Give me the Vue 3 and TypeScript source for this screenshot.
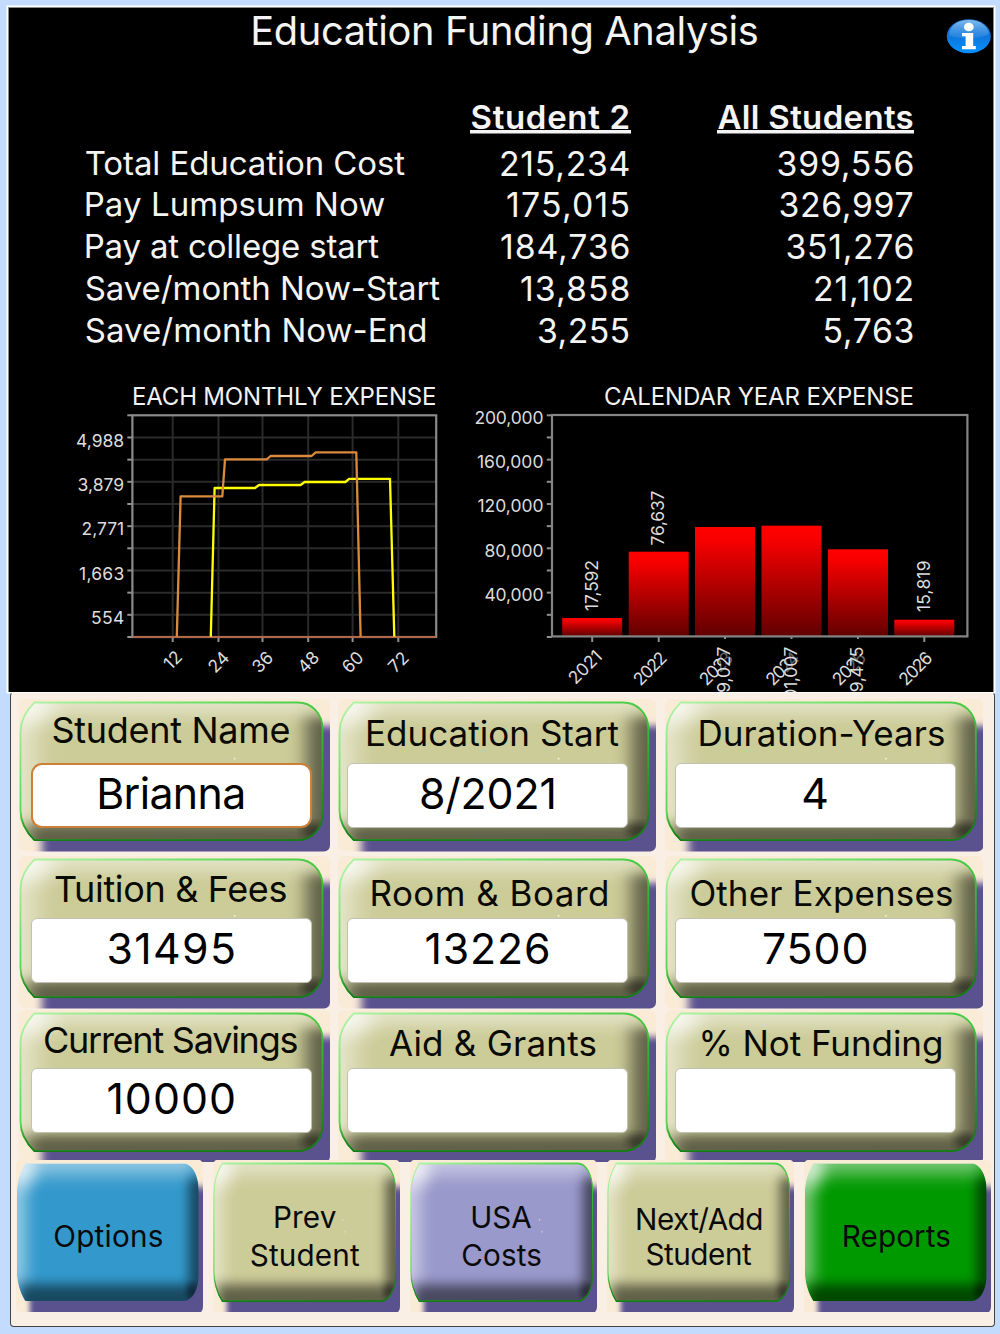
<script setup lang="ts">
interface Row { label: string; lw: number; a: string; aw: number; b: string; bw: number }
interface Card { label: string; x: number; w: number; base: number; value: string; vw: number; fx: number; fy: number; small: boolean; active?: boolean }
interface Line { text: string; w: number }
interface Button { lines: Line[]; color: string; edge: boolean; top: number; lh: number; shift: number }

/* Spreads the letters so that the inked width of the text equals the given number of pixels,
   and trims the side bearings so that the box is exactly the ink. */
const vFit = {
  mounted(el: HTMLElement, binding: { value: number }) {
    const cs = getComputedStyle(el)
    const ctx = document.createElement('canvas').getContext('2d')
    if (!ctx) return
    ctx.font = `${cs.fontWeight} ${cs.fontSize} Inter, sans-serif`
    const text = (el.textContent || '').trim()
    const m = ctx.measureText(text)
    const ink = m.actualBoundingBoxRight + m.actualBoundingBoxLeft
    const gap = text.length > 1 ? (binding.value - 1.4 - ink) / (text.length - 1) : 0
    el.style.letterSpacing = `${gap}px`
    el.style.marginLeft = `${m.actualBoundingBoxLeft + 0.7}px`
    el.style.marginRight = `${m.actualBoundingBoxRight - m.width - gap + 0.7}px`
  },
}

const rows: Row[] = [
  { label: 'Total Education Cost', lw: 321, a: '215,234', aw: 129, b: '399,556', bw: 135.5 },
  { label: 'Pay Lumpsum Now', lw: 300, a: '175,015', aw: 123, b: '326,997', bw: 133.5 },
  { label: 'Pay at college start', lw: 295, a: '184,736', aw: 129, b: '351,276', bw: 126.5 },
  { label: 'Save/month Now-Start', lw: 356, a: '13,858', aw: 109, b: '21,102', bw: 99 },
  { label: 'Save/month Now-End', lw: 341, a: '3,255', aw: 91, b: '5,763', bw: 89.5 },
]

const cards: Card[] = [
  { label: 'Student Name', x: 34, w: 237.5, base: 43.8, value: 'Brianna', vw: 145.5, fx: 12, fy: 63.5, small: false, active: true },
  { label: 'Education Start', x: 29, w: 252, base: 46.3, value: '8/2021', vw: 134, fx: 8.5, fy: 63.5, small: true },
  { label: 'Duration-Years', x: 35, w: 245, base: 46.3, value: '4', vw: 25, fx: 10, fy: 63.5, small: true },
  { label: 'Tuition & Fees', x: 35.5, w: 233, base: 46, value: '31495', vw: 127, fx: 12, fy: 61.5, small: false },
  { label: 'Room & Board', x: 33.5, w: 236, base: 49.5, value: '13226', vw: 123, fx: 8.5, fy: 61.5, small: true },
  { label: 'Other Expenses', x: 26, w: 262, base: 49.5, value: '7500', vw: 104, fx: 10, fy: 61.5, small: true },
  { label: 'Current Savings', x: 25.5, w: 254, base: 43.5, value: '10000', vw: 127, fx: 12, fy: 58.5, small: false },
  { label: 'Aid & Grants', x: 50, w: 208, base: 46.3, value: '', vw: 0, fx: 8.5, fy: 58.5, small: true },
  { label: '% Not Funding', x: 36, w: 241, base: 46.3, value: '', vw: 0, fx: 10, fy: 58.5, small: true },
]

const buttons: Button[] = [
  { lines: [{ text: 'Options', w: 110 }], color: '#3399cc', edge: false, top: 57, lh: 38, shift: -1 },
  { lines: [{ text: 'Prev', w: 62 }, { text: 'Student', w: 110.5 }], color: '#cccc99', edge: true, top: 38.5, lh: 38, shift: -1 },
  { lines: [{ text: 'USA', w: 60.5 }, { text: 'Costs', w: 80.5 }], color: '#9999cc', edge: true, top: 38.5, lh: 38, shift: -1.5 },
  { lines: [{ text: 'Next/Add', w: 125.5 }, { text: 'Student', w: 107 }], color: '#cccc99', edge: true, top: 42, lh: 35.3, shift: -1 },
  { lines: [{ text: 'Reports', w: 108 }], color: '#009900', edge: false, top: 57, lh: 38, shift: 0 },
]

const body = 'M15.5 3.5 H279 C292 3.5 303.5 14 303.5 30 V116 C303.5 131 292 141.5 279 141.5 H15.5 C9 135 1.5 125 1.5 112 V33 C1.5 20 9 10 15.5 3.5 Z'

const yTicks = Array.from({ length: 11 }, (_, i) => 415.3 + i * 22.17)
const monthY = [
  { t: '4,988', w: 46.5, y: 446.8 }, { t: '3,879', w: 45, y: 491 }, { t: '2,771', w: 41, y: 535.3 },
  { t: '1,663', w: 43.5, y: 579.5 }, { t: '554', w: 31.5, y: 624 },
]
const months = [
  { t: '12', x: 172.7, cy: 660 }, { t: '24', x: 218.5, cy: 662 }, { t: '36', x: 262.5, cy: 662 },
  { t: '48', x: 308.2, cy: 662 }, { t: '60', x: 352.6, cy: 662 }, { t: '72', x: 398.3, cy: 662 },
]
const yearY = [
  { t: '200,000', w: 67.5, y: 423.8 }, { t: '160,000', w: 65, y: 468 }, { t: '120,000', w: 64.5, y: 512.3 },
  { t: '80,000', w: 57.5, y: 556.5 }, { t: '40,000', w: 57.5, y: 600.8 },
]
const years = [
  { t: '2021', x: 592.2, top: 618, v: '17,592', vy: 611, vw: 51, low: false, cx: 585, cy: 667 },
  { t: '2022', x: 658.7, top: 551.7, v: '76,637', vy: 545.5, vw: 55, low: false, cx: 650, cy: 668.5 },
  { t: '2023', x: 725, top: 527, v: '99,027', vy: 703.5, vw: 57, low: true, cx: 716, cy: 668.5 },
  { t: '2024', x: 791.5, top: 525.7, v: '101,007', vy: 706.5, vw: 60, low: true, cx: 782.5, cy: 668.5 },
  { t: '2025', x: 858, top: 549.3, v: '79,475', vy: 701.5, vw: 55, low: true, cx: 849, cy: 668.5 },
  { t: '2026', x: 924.3, top: 619.7, v: '15,819', vy: 612, vw: 51.5, low: false, cx: 915.5, cy: 668.5 },
]
</script>

<template>
  <main class="app">
    <svg class="defs" width="0" height="0" aria-hidden="true">
      <defs>
        <clipPath id="tileClip"><rect width="311" height="153" rx="6" /></clipPath>
        <clipPath id="bodyClip"><path :d="body" /></clipPath>
        <filter id="soft4" x="-20%" y="-20%" width="140%" height="140%" color-interpolation-filters="sRGB"><feGaussianBlur stdDeviation="4" /></filter>
        <filter id="soft6" x="-60" y="-60" width="440" height="280" filterUnits="userSpaceOnUse" color-interpolation-filters="sRGB"><feGaussianBlur stdDeviation="9 6" /></filter>
        <filter id="soft9" x="-90" y="-90" width="500" height="340" filterUnits="userSpaceOnUse" color-interpolation-filters="sRGB"><feGaussianBlur stdDeviation="12 9" /></filter>
        <linearGradient id="edge" x1="0" y1="0" x2="1" y2="1">
          <stop offset="0" stop-color="#b5f3a9" />
          <stop offset=".3" stop-color="#6be066" />
          <stop offset=".6" stop-color="#35bf32" />
          <stop offset="1" stop-color="#167316" />
        </linearGradient>
        <linearGradient id="edgeLow" x1="0" y1="0" x2="0" y2="1">
          <stop offset=".8" stop-color="#1a7a1a" stop-opacity="0" />
          <stop offset=".97" stop-color="#1a7a1a" />
        </linearGradient>
        <linearGradient id="bar" x1="0" y1="0" x2="0" y2="1">
          <stop offset="0" stop-color="#ff0000" /><stop offset=".12" stop-color="#f80000" /><stop offset="1" stop-color="#620000" />
        </linearGradient>
        <linearGradient id="info" x1="0" y1="0" x2="0" y2="1">
          <stop offset="0" stop-color="#1f78d2" /><stop offset=".45" stop-color="#0d73d8" /><stop offset="1" stop-color="#0592ff" />
        </linearGradient>
        <linearGradient id="gloss" x1="0" y1="0" x2="0" y2="1">
          <stop offset="0" stop-color="#9fd0f5" stop-opacity=".75" /><stop offset="1" stop-color="#5aaaf0" stop-opacity=".25" />
        </linearGradient>
      </defs>
    </svg>

    <section class="display">
      <header class="top">
        <h1 v-fit="506">Education Funding Analysis</h1>
        <svg class="info" width="46" height="36" viewBox="946 18 46 36">
          <ellipse cx="968.8" cy="36.3" rx="22" ry="17" fill="url(#info)" />
          <path d="M949 35 C950 25 958 20 968.8 20 C980 20 988 26 989 34 C982 39 956 40 949 35 Z" fill="url(#gloss)" />
          <ellipse cx="968.8" cy="27" rx="4.9" ry="4.3" fill="#fff" />
          <path d="M962 33 H973.2 V46 H975.8 V49.3 H962 V46 H965.6 V36.2 H962 Z" fill="#fff" />
        </svg>
      </header>
      <div class="table">
        <span></span>
        <span class="cell"><b v-fit="158.5">Student 2</b></span>
        <span class="cell"><b v-fit="196.5">All Students</b></span>
        <template v-for="r in rows" :key="r.label">
          <span class="name"><span v-fit="r.lw" class="t">{{ r.label }}</span></span>
          <span class="cell num"><span v-fit="r.aw" class="t">{{ r.a }}</span></span>
          <span class="cell num"><span v-fit="r.bw" class="t">{{ r.b }}</span></span>
        </template>
      </div>
      <div class="charts">
        <svg width="451" height="317" viewBox="9 375 451 317">
          <text class="ct" x="132" y="404.7" textLength="304.5">EACH MONTHLY EXPENSE</text>
          <g stroke="#2b2b2b" stroke-width="2">
            <line v-for="y in yTicks.slice(1, 10)" :key="y" x1="133" x2="436" :y1="y" :y2="y" />
            <line v-for="m in months" :key="m.t" :x1="m.x" :x2="m.x" y1="416" y2="636" />
          </g>
          <g stroke="#929292" stroke-width="2">
            <line v-for="y in yTicks" :key="y" x1="127.3" x2="133" :y1="y" :y2="y" />
            <line v-for="m in months" :key="m.t" :x1="m.x" :x2="m.x" y1="637" y2="642" />
          </g>
          <rect x="132.4" y="415.3" width="303.8" height="221.7" fill="none" stroke="#8a8a8a" stroke-width="2.2" />
          <line x1="133" x2="436" y1="637" y2="637" stroke="#b26848" stroke-width="1.8" />
          <g fill="none" stroke-width="2.3" stroke-linejoin="round">
            <path stroke="#ffff00" d="M210.8 636.6 L214.6 488 H255 L259 485 H300.6 L304.6 482 H345.3 L349.2 478.8 H390 L394.3 636.6" />
            <path stroke="#d98a3c" d="M176.8 636.6 L180.6 496.4 H222.3 L225 459.4 H266.7 L270.6 456 H311.6 L315.6 452.4 H356.3 L360.6 636.6" />
          </g>
          <text v-for="l in monthY" :key="l.t" class="ax" :x="123.6 - l.w - 1" :y="l.y" :textLength="l.w + 1.6">{{ l.t }}</text>
          <text v-for="m in months" :key="m.t" class="ax" text-anchor="middle" :transform="`translate(${m.x} ${m.cy}) rotate(-45)`" y="6.2">{{ m.t }}</text>
        </svg>
        <svg width="534" height="317" viewBox="460 375 534 317">
          <text class="ct" x="604" y="404.7" textLength="310">CALENDAR YEAR EXPENSE</text>
          <rect v-for="b in years" :key="b.t" :x="b.x - 30" :y="b.top" width="60" :height="636 - b.top" fill="url(#bar)" />
          <g stroke="#8f8f8f" stroke-width="2">
            <line v-for="y in yTicks" :key="y" x1="546.8" x2="552" :y1="y" :y2="y" />
            <line v-for="b in years" :key="b.t" :x1="b.x" :x2="b.x" y1="637" :y2="b.low ? 639 : 642" />
          </g>
          <rect x="552" y="415" width="415.4" height="221.4" fill="none" stroke="#858585" stroke-width="2.2" />
          <text v-for="l in yearY" :key="l.t" class="ax" :x="542.9 - l.w - 1" :y="l.y" :textLength="l.w + 1.6">{{ l.t }}</text>
          <text v-for="b in years" :key="b.t" class="ax" text-anchor="middle" :transform="`translate(${b.cx} ${b.cy}) rotate(-45)`" y="6.2" textLength="39">{{ b.t }}</text>
          <template v-for="b in years" :key="b.t">
            <rect v-if="b.low" :x="b.x - 7" y="639" width="16" height="53" fill="#000" fill-opacity=".55" />
            <text class="ax" :transform="`translate(${b.x + 5.3} ${b.vy}) rotate(-90)`" :textLength="b.vw">{{ b.v }}</text>
          </template>
        </svg>
      </div>
    </section>

    <section class="controls">
      <div class="cards">
        <article v-for="c in cards" :key="c.label" class="card">
          <svg class="tile" viewBox="0 0 311 153" preserveAspectRatio="none">
            <g clip-path="url(#tileClip)">
              <rect width="311" height="153" fill="#faebd7" />
              <rect x="23" y="27" width="330" height="160" rx="6" fill="#5a528f" filter="url(#soft4)" />
            </g>
            <g clip-path="url(#bodyClip)">
              <path :d="body" fill="#cccc99" />
              <path d="M-60 -60 H296 V14 H17 V126 H-60 Z" fill="#fff" opacity=".5" filter="url(#soft9)" />
              <ellipse cx="8" cy="8" rx="26" ry="18" fill="#fff" opacity=".7" filter="url(#soft9)" />
              <path d="M287 18 H370 V200 H8 V125 H287 Z" fill="#000" opacity=".52" filter="url(#soft6)" />
              <ellipse cx="294" cy="132" rx="11" ry="8" fill="#000" opacity=".4" filter="url(#soft4)" />
            </g>
            <path :d="body" fill="none" stroke="url(#edge)" stroke-width="1.8" />
            <path :d="body" fill="none" stroke="url(#edgeLow)" stroke-width="1.8" />
            <circle cx="215.7" cy="60" r="1" fill="#eeeede" />
          </svg>
          <div class="label" :class="{ small: c.small }" :style="{ height: c.fy + 'px', paddingTop: c.base - (c.small ? 32.7 : 33.1) + 'px', paddingLeft: c.x + 'px' }">
            <span v-fit="c.w" class="t">{{ c.label }}</span>
          </div>
          <div class="field" :class="{ active: c.active }" :style="{ marginLeft: c.fx + 'px' }">
            <span v-if="c.value" v-fit="c.vw" class="t">{{ c.value }}</span>
          </div>
        </article>
      </div>
      <nav class="buttons">
        <button v-for="(b, i) in buttons" :key="i" type="button" class="btn" :style="{ paddingTop: b.top + 'px' }">
          <svg class="tile" viewBox="0 0 311 153" preserveAspectRatio="none">
            <g clip-path="url(#tileClip)">
              <rect width="311" height="153" fill="#faebd7" />
              <rect x="23" y="27" width="330" height="160" rx="6" fill="#5a528f" filter="url(#soft4)" />
            </g>
            <g clip-path="url(#bodyClip)">
              <path :d="body" :fill="b.color" />
              <path d="M-60 -60 H296 V14 H17 V126 H-60 Z" fill="#fff" opacity=".48" filter="url(#soft9)" />
              <ellipse cx="8" cy="8" rx="26" ry="18" fill="#fff" opacity=".7" filter="url(#soft9)" />
              <path d="M287 18 H370 V200 H8 V125 H287 Z" fill="#000" opacity=".52" filter="url(#soft6)" />
              <ellipse cx="294" cy="132" rx="11" ry="8" fill="#000" opacity=".4" filter="url(#soft4)" />
            </g>
            <template v-if="b.edge">
              <path :d="body" fill="none" stroke="url(#edge)" stroke-width="1.8" />
              <path :d="body" fill="none" stroke="url(#edgeLow)" stroke-width="1.8" />
              <circle cx="215.7" cy="60" r="1" fill="#eeeede" opacity=".7" />
              <circle cx="219.5" cy="72" r="1" fill="#eeeede" opacity=".7" />
            </template>
          </svg>
          <span v-for="l in b.lines" :key="l.text" class="line" :style="{ height: b.lh + 'px', lineHeight: b.lh + 'px', marginLeft: b.shift * 2 + 'px' }">
            <span v-fit="l.w" class="t">{{ l.text }}</span>
          </span>
        </button>
      </nav>
    </section>
  </main>
</template>

<style>
html, body { margin: 0; background: #c3dcfe; }
</style>

<style scoped>
.app {
  box-sizing: border-box;
  width: 1000px;
  height: 1334px;
  padding: 7px 6px 8px 8px;
  overflow: hidden;
  background: #c3dcfe;
  font-family: Inter, 'Liberation Sans', sans-serif;
  font-kerning: normal;
}
.defs { position: absolute; }
.display {
  box-sizing: border-box;
  height: 685px;
  border: 1px solid #8b8b8b;
  border-bottom: 0;
  box-shadow: 0 0 0 1.5px #fff;
  background: #000;
  color: #f4f4f4;
}
.top { position: relative; height: 89px; display: flex; align-items: flex-start; padding-left: 243.5px; }
.top h1 {
  margin: 0;
  font-size: 39.8px;
  font-weight: 400;
  line-height: 45px;
  white-space: nowrap;
}
.info { position: absolute; left: 937px; top: 10px; }
.t { display: inline-block; white-space: nowrap; }
.table {
  height: 278px;
  display: grid;
  grid-template-columns: 387px 157.3px 284px;
  grid-template-rows: 45.6px repeat(5, 41.75px);
  margin-left: 76px;
  font-size: 33px;
}
.name, .cell { display: flex; line-height: 41.75px; }
.cell { justify-content: flex-end; }
.num { font-size: 33.8px; }
.cell b {
  height: 38px;
  margin-top: -0.5px;
  font-weight: 600;
  white-space: nowrap;
  box-sizing: border-box;
  background: linear-gradient(#f4f4f4, #f4f4f4) 0 33px / 100% 3.5px no-repeat;
}
.charts { display: flex; height: 317px; }
.charts svg { flex: none; display: block; overflow: hidden; }
.ct { font-size: 24px; fill: #f2f2f2; }
.ax { font-size: 17.5px; fill: #dcdcdc; }
.controls {
  box-sizing: border-box;
  position: relative;
  width: 985px;
  height: 635px;
  margin-left: 1.5px;
  padding: 6px 0 0;
  border: 1.5px solid #444;
  border-top-color: #fff;
  border-radius: 4px;
  background: #faefe5;
}
.cards {
  display: grid;
  grid-template-columns: 311px 318px 318.5px;
  grid-template-rows: 157px 153.5px 150px;
  column-gap: 8.5px;
  margin-left: 8.2px;
}
.card { position: relative; height: 152.5px; }
.tile { position: absolute; left: 0; top: 0; width: 100%; height: 100%; }
.label { position: relative; box-sizing: border-box; font-size: 36px; line-height: 40px; color: #0a0a05; }
.label.small { font-size: 35px; }
.field {
  position: relative;
  box-sizing: border-box;
  display: flex;
  justify-content: center;
  width: 281px;
  height: 65px;
  border: 1px solid #c2c2b4;
  border-radius: 6px;
  background: #fff;
  color: #000;
  font-size: 42.8px;
  line-height: 59px;
}
.field.active { border: 2px solid #cd7f37; border-radius: 11px; line-height: 57px; }
.buttons { display: grid; grid-template-columns: repeat(5, 187px); column-gap: 9.9px; margin-left: 5.5px; }
.btn {
  position: relative;
  box-sizing: border-box;
  height: 152.5px;
  padding: 0;
  border: 0;
  background: none;
  font-family: inherit;
  font-size: 29.7px;
  color: #0a0a0a;
  display: flex;
  flex-direction: column;
  align-items: center;
}
.line { position: relative; display: block; }
</style>
